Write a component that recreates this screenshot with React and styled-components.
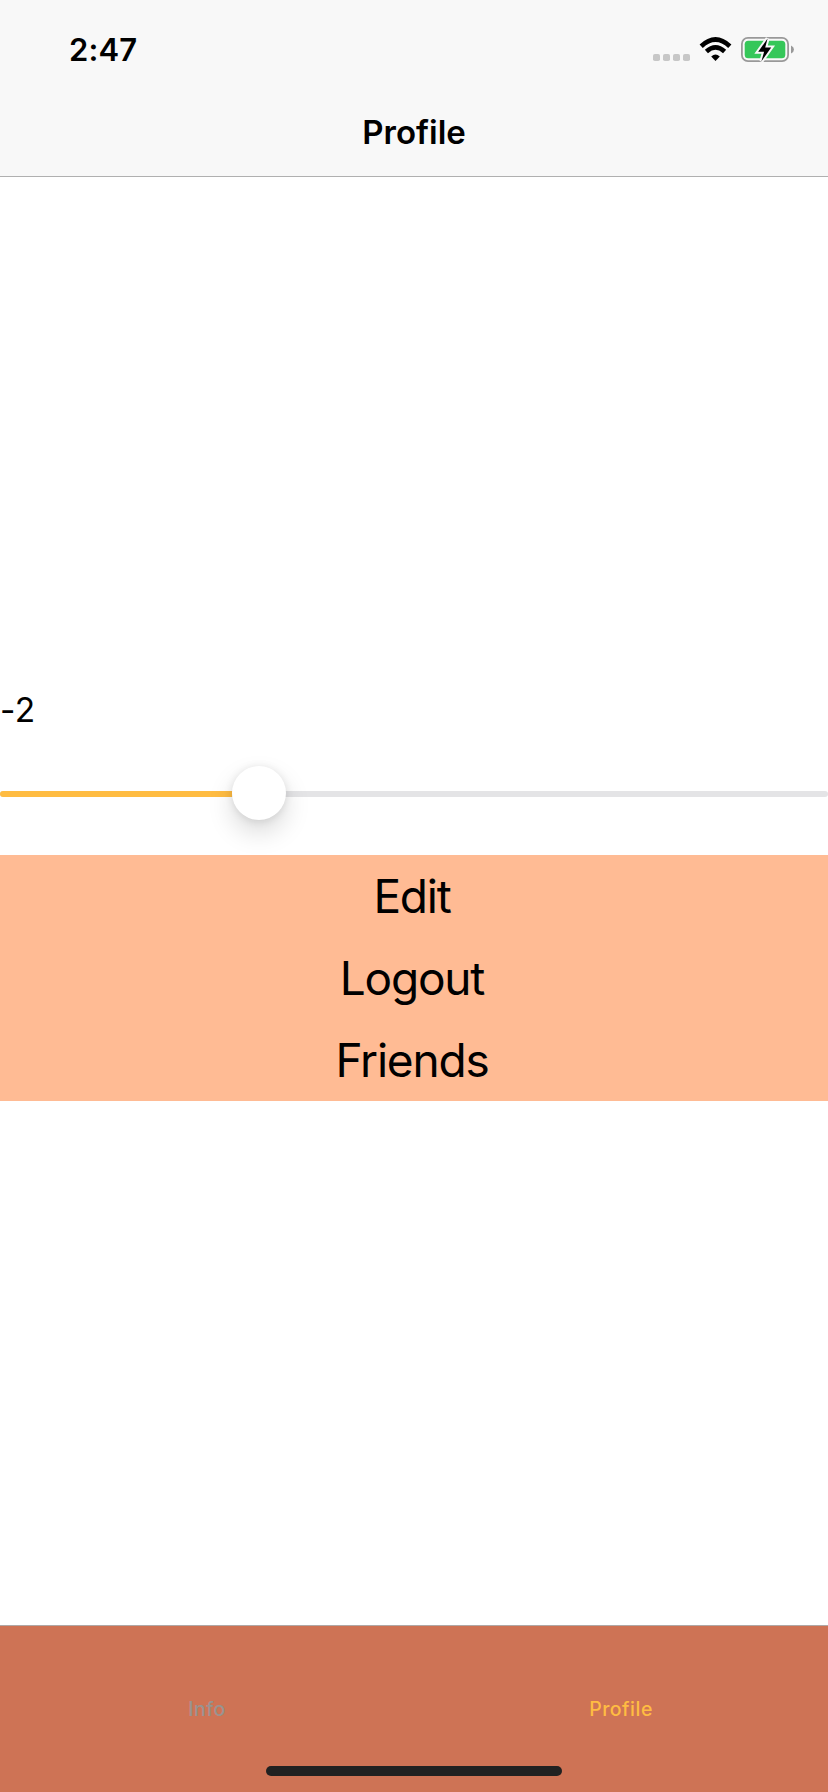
import React, { useState } from 'react';
import styled, { createGlobalStyle } from 'styled-components';

const GlobalStyle = createGlobalStyle`
  * { box-sizing: border-box; }
  body { margin: 0; background: #fff; }
`;

const Screen = styled.div`
  display: flex;
  flex-direction: column;
  width: 828px;
  height: 1792px;
  background: #fff;
  color: #000;
  font-family: Inter, "Liberation Sans", sans-serif;
  overflow: hidden;
`;

const Header = styled.header`
  flex: none;
  height: 177px;
  background: #f8f8f8;
  border-bottom: 1px solid #b0b0b0;
`;

const StatusBar = styled.div`
  display: flex;
  justify-content: space-between;
  height: 88px;
  padding: 30px 32px 0 69px;
`;

const Clock = styled.div`
  font-size: 31px;
  font-weight: 600;
  line-height: 40px;
  letter-spacing: 0.1px;
`;

const StatusIcons = styled.svg`
  display: block;
  width: 144px;
  height: 40px;
`;

const Title = styled.h1`
  margin: 0;
  font-size: 33px;
  font-weight: 600;
  line-height: 88px;
  text-align: center;
`;

const Content = styled.main`
  flex: 1;
  display: flex;
  flex-direction: column;
  padding-top: 513px;
`;

const Value = styled.div`
  height: 64px;
  font-size: 33.5px;
  line-height: 40px;
  letter-spacing: 0.4px;
`;

const SliderRow = styled.div`
  display: flex;
  align-items: center;
  height: 80px;
  margin-bottom: 21px;
`;

const Track = styled.div`
  display: flex;
  align-items: center;
  width: 100%;
  height: 6px;
  border-radius: 3px;
  background: #e4e4e6;
`;

const Fill = styled.div`
  width: 232px;
  height: 6px;
  border-radius: 3px 0 0 3px;
  background: #ffbc42;
`;

const Thumb = styled.div`
  flex: none;
  width: 54px;
  height: 54px;
  margin-top: -2px;
  border-radius: 50%;
  background: #fff;
  box-shadow: 0 12px 26px rgba(0, 0, 0, 0.15), 0 1px 8px rgba(0, 0, 0, 0.1);
`;

const Actions = styled.div`
  display: flex;
  flex-direction: column;
  background: #ffbb94;
`;

const Action = styled.button`
  height: 82px;
  padding: 0 4px 0 0;
  border: 0;
  background: none;
  color: #000;
  font-family: inherit;
  font-size: 46px;
  line-height: 82px;
  letter-spacing: -1.2px;
`;

const TabBar = styled.nav`
  flex: none;
  display: flex;
  flex-direction: column;
  align-items: center;
  height: 167px;
  border-top: 1px solid #b0a8a6;
  background: #ce7355;
`;

const Tabs = styled.div`
  display: flex;
  width: 100%;
  height: 140px;
`;

const Tab = styled.div`
  flex: 1;
  padding-top: 71px;
  font-size: 19.5px;
  font-weight: 500;
  line-height: 24px;
  letter-spacing: 0.5px;
  text-align: center;
  color: ${(p) => (p.$active ? '#ffbc42' : '#999390')};
`;

const HomeIndicator = styled.div`
  width: 296px;
  height: 10px;
  border-radius: 5px;
  background: #212121;
`;

const bolt = 'M767.6 38.5L758.2 51.8h5.9l-2.7 9.5 9.8-13.8h-6z';

function Status() {
  return (
    <StatusIcons viewBox="652 30 144 40">
      <g fill="#c7c7c7">
        {[653, 663, 673, 683].map((x) => (
          <rect key={x} x={x} y="54" width="7" height="7" rx="1.8" />
        ))}
      </g>
      <g fill="none" stroke="#000" strokeWidth="4.7">
        <path d="M701.2 46.3Q715.5 32.8 729.8 46.3" />
        <path d="M706.4 51.4Q715.5 43.4 724.6 51.4" />
      </g>
      <path d="M711.2 56.4Q715.5 52.8 719.8 56.4L715.5 61z" />
      <rect x="741.9" y="37.9" width="46.2" height="23.2" rx="6" fill="#f8f8f8" stroke="#999" strokeWidth="1.8" />
      <rect x="744.7" y="40.7" width="40.6" height="17.6" rx="3.5" fill="#35c759" />
      <path d="M791 45.5Q794 46.8 794 49.5T791 53.5z" fill="#999" />
      <path d={bolt} fill="#f8f8f8" stroke="#f8f8f8" strokeWidth="4" />
      <path d={bolt} fill="#000" />
    </StatusIcons>
  );
}

const actions = ['Edit', 'Logout', 'Friends'];
const tabs = ['Info', 'Profile'];

export default function App() {
  const [tab, setTab] = useState('Profile');
  return (
    <Screen>
      <GlobalStyle />
      <Header>
        <StatusBar>
          <Clock>2:47</Clock>
          <Status />
        </StatusBar>
        <Title>Profile</Title>
      </Header>
      <Content>
        <Value>-2</Value>
        <SliderRow>
          <Track>
            <Fill />
            <Thumb />
          </Track>
        </SliderRow>
        <Actions>
          {actions.map((label) => (
            <Action key={label}>{label}</Action>
          ))}
        </Actions>
      </Content>
      <TabBar>
        <Tabs>
          {tabs.map((name) => (
            <Tab key={name} $active={name === tab} onClick={() => setTab(name)}>{name}</Tab>
          ))}
        </Tabs>
        <HomeIndicator />
      </TabBar>
    </Screen>
  );
}
